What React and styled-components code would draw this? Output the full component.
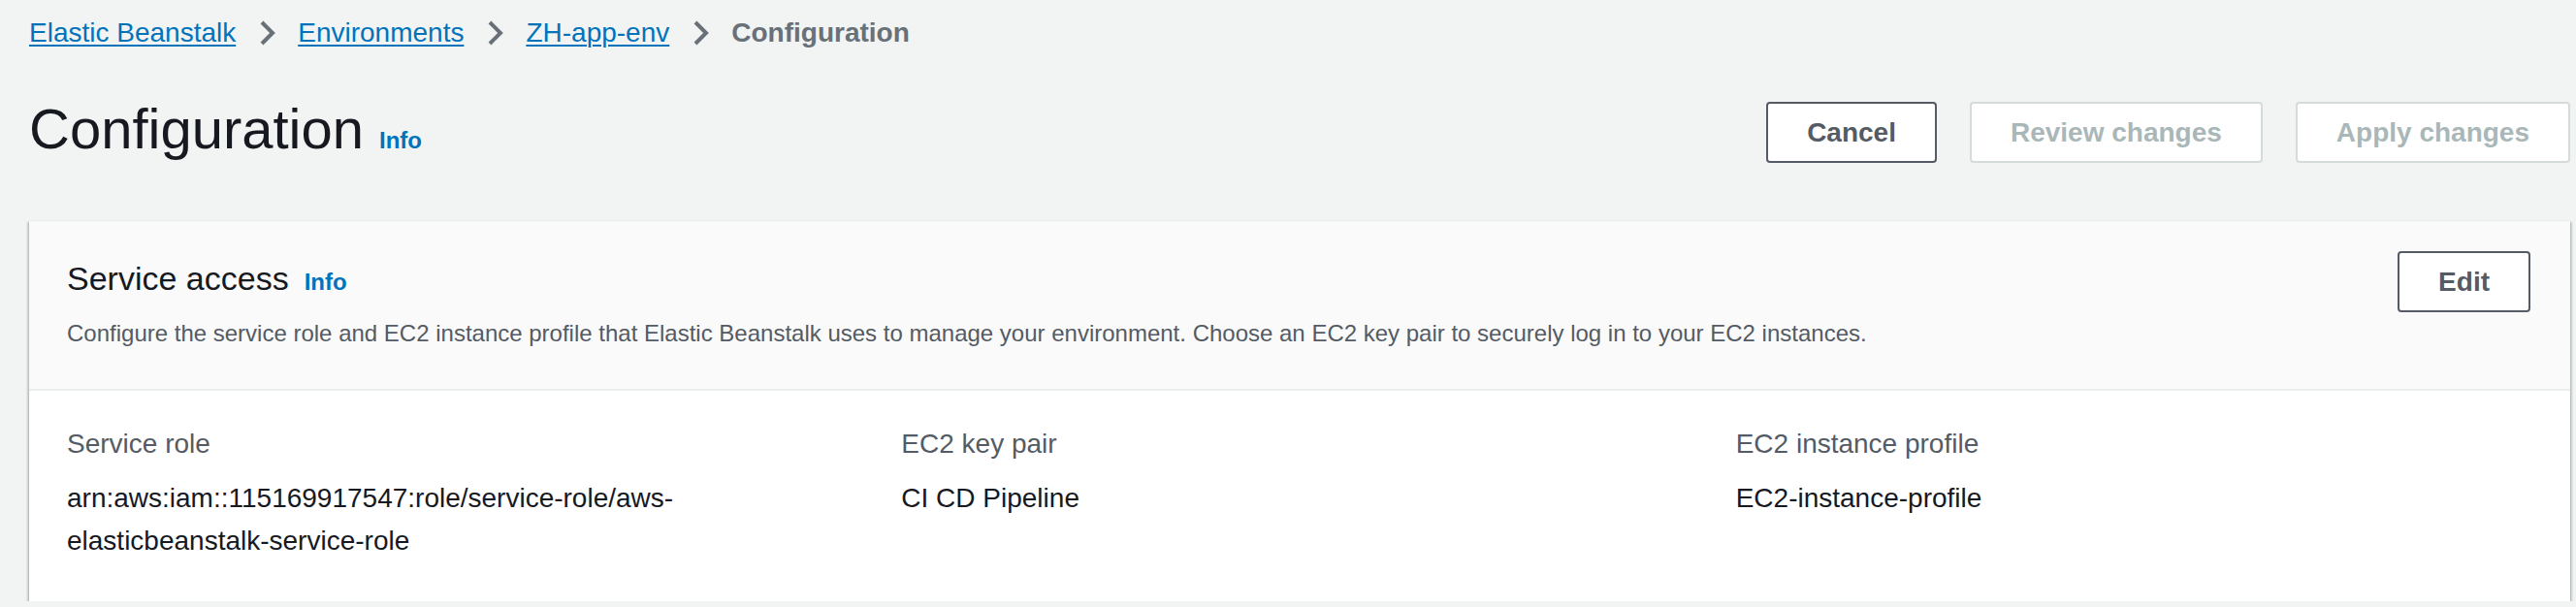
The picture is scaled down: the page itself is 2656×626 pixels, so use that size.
import React from "react";
import styled, { createGlobalStyle } from "styled-components";

const GlobalStyle = createGlobalStyle`
  html, body {
    margin: 0;
    padding: 0;
    background-color: #f2f3f3;
    font-family: "Liberation Sans", Arial, sans-serif;
    color: #16191f;
  }
`;

const crumbs = [
  { label: "Elastic Beanstalk", href: "#" },
  { label: "Environments", href: "#" },
  { label: "ZH-app-env", href: "#" },
  { label: "Configuration" },
];

const details = [
  {
    label: "Service role",
    value: (
      <>
        arn:aws:iam::115169917547:role/service-role/aws-
        <br />
        elasticbeanstalk-service-role
      </>
    ),
  },
  { label: "EC2 key pair", value: "CI CD Pipeline" },
  { label: "EC2 instance profile", value: "EC2-instance-profile" },
];

const Chevron = () => (
  <ChevronIcon viewBox="0 0 16 16" aria-hidden="true">
    <path d="M5.5 2.5l5.5 5.5-5.5 5.5" />
  </ChevronIcon>
);

const App = () => {
  return (
    <Page>
      <GlobalStyle />

      <Breadcrumbs>
        {crumbs.map((c, i) => (
          <React.Fragment key={c.label}>
            {i > 0 && <Chevron />}
            {c.href ? (
              <CrumbLink href={c.href}>{c.label}</CrumbLink>
            ) : (
              <CrumbCurrent>{c.label}</CrumbCurrent>
            )}
          </React.Fragment>
        ))}
      </Breadcrumbs>

      <PageHeader>
        <TitleGroup $lift={6}>
          <PageTitle>Configuration</PageTitle>
          <InfoLink href="#">Info</InfoLink>
        </TitleGroup>
        <Actions>
          <Button>Cancel</Button>
          <Button disabled>Review changes</Button>
          <Button disabled>Apply changes</Button>
        </Actions>
      </PageHeader>

      <Container>
        <ContainerHeader>
          <HeaderRow>
            <TitleGroup $lift={8}>
              <SectionTitle>Service access</SectionTitle>
              <InfoLink href="#">Info</InfoLink>
            </TitleGroup>
            <Button>Edit</Button>
          </HeaderRow>
          <Description>
            Configure the service role and EC2 instance profile that Elastic
            Beanstalk uses to manage your environment. Choose an EC2 key pair
            to securely log in to your EC2 instances.
          </Description>
        </ContainerHeader>

        <ContainerBody>
          {details.map((d) => (
            <Field key={d.label}>
              <FieldLabel>{d.label}</FieldLabel>
              <FieldValue>{d.value}</FieldValue>
            </Field>
          ))}
        </ContainerBody>
      </Container>
    </Page>
  );
};

const Page = styled.div`
  padding: 12px 6px 0 30px;
`;

const Breadcrumbs = styled.nav`
  display: flex;
  align-items: center;
  height: 44px;
  font-size: 28px;
  line-height: 44px;
`;

const CrumbLink = styled.a`
  color: #0073bb;
  text-decoration: underline;
  text-underline-offset: 3px;
  text-decoration-thickness: 2px;
`;

const CrumbCurrent = styled.span`
  color: #687078;
  font-weight: bold;
`;

const ChevronIcon = styled.svg`
  width: 32px;
  height: 32px;
  margin: 0 16px;
  fill: none;
  stroke: #687078;
  stroke-width: 2;
`;

const PageHeader = styled.div`
  display: flex;
  align-items: center;
  justify-content: space-between;
  margin-top: 41px;
`;

const TitleGroup = styled.div`
  display: flex;
  align-items: baseline;
  gap: 16px;
  margin-bottom: ${(p) => p.$lift || 0}px;
`;

const PageTitle = styled.h1`
  margin: 0;
  font-size: 58px;
  line-height: 72px;
  font-weight: normal;
  color: #16191f;
`;

const SectionTitle = styled.h2`
  margin: 0;
  font-size: 34px;
  line-height: 44px;
  font-weight: normal;
  color: #16191f;
`;

const InfoLink = styled.a`
  color: #0073bb;
  font-size: 24px;
  font-weight: bold;
  text-decoration: none;
`;

const Actions = styled.div`
  display: flex;
  gap: 34px;
`;

const Button = styled.button`
  font-family: inherit;
  font-size: 28px;
  font-weight: bold;
  line-height: 43px;
  padding: 8px 40px;
  border-radius: 4px;
  background: #ffffff;
  border: 2px solid ${(p) => (p.disabled ? "#d5dbdb" : "#545b64")};
  color: ${(p) => (p.disabled ? "#aab7b8" : "#545b64")};
  cursor: ${(p) => (p.disabled ? "default" : "pointer")};
`;

const Container = styled.section`
  margin-top: 52px;
  background: #ffffff;
  border-top: 1px solid #eaeded;
  box-shadow: 0 2px 2px 0 rgba(0, 28, 36, 0.35),
    2px 2px 2px 0 rgba(0, 28, 36, 0.15), -2px 2px 2px 0 rgba(0, 28, 36, 0.15);
`;

const ContainerHeader = styled.div`
  background: #fafafa;
  border-bottom: 2px solid #eaeded;
  padding: 31px 41px 41px 39px;
`;

const HeaderRow = styled.div`
  display: flex;
  align-items: center;
  justify-content: space-between;
`;

const Description = styled.p`
  margin: 6px 0 0;
  font-size: 24px;
  line-height: 32px;
  color: #545b64;
`;

const ContainerBody = styled.div`
  display: grid;
  grid-template-columns: repeat(3, 1fr);
  column-gap: 40px;
  padding: 33px 40px 40px 39px;
`;

const Field = styled.div`
  display: flex;
  flex-direction: column;
`;

const FieldLabel = styled.div`
  font-size: 28px;
  line-height: 44px;
  color: #545b64;
  margin-bottom: 12px;
`;

const FieldValue = styled.div`
  font-size: 28px;
  line-height: 44px;
  color: #16191f;
`;

export default App;
